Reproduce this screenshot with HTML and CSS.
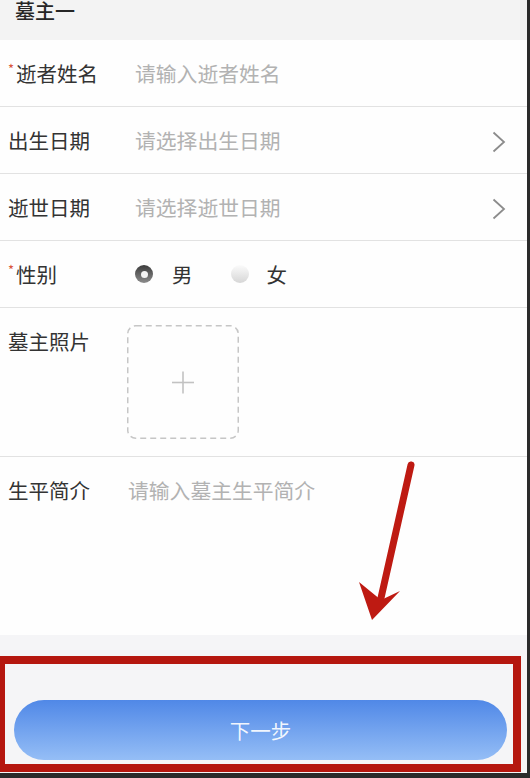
FILE: index.html
```html
<!DOCTYPE html>
<html lang="zh-CN">

<head>
  <meta charset="UTF-8">
  <meta name="viewport" content="width=device-width, initial-scale=1.0">
  <title>墓主信息</title>
  <link rel="stylesheet" href="styles.css">
</head>

<body>
  <div class="screen">
    <div class="section-title">墓主一</div>

    <div class="form">
      <div class="row">
        <span class="label"><span class="req">*</span>逝者姓名</span>
        <span class="placeholder">请输入逝者姓名</span>
      </div>

      <div class="row">
        <span class="label">出生日期</span>
        <span class="placeholder">请选择出生日期</span>
        <svg class="chevron" width="14" height="22" viewBox="0 0 14 22">
          <polyline points="1.5,1.5 12,11 1.5,20.5" fill="none" stroke="#8c8c8c" stroke-width="1.8" />
        </svg>
      </div>

      <div class="row">
        <span class="label">逝世日期</span>
        <span class="placeholder">请选择逝世日期</span>
        <svg class="chevron" width="14" height="22" viewBox="0 0 14 22">
          <polyline points="1.5,1.5 12,11 1.5,20.5" fill="none" stroke="#8c8c8c" stroke-width="1.8" />
        </svg>
      </div>

      <div class="row">
        <span class="label"><span class="req">*</span>性别</span>
        <div class="radio-group">
          <span class="radio checked"></span>
          <span class="radio-text">男</span>
          <span class="radio"></span>
          <span class="radio-text">女</span>
        </div>
      </div>

      <div class="row row-photo">
        <span class="label">墓主照片</span>
        <div class="uploader">
          <svg width="112" height="114" viewBox="0 0 112 114">
            <rect x="0.75" y="0.75" width="110.5" height="112.5" rx="8" fill="none" stroke="#c6c6c6"
              stroke-width="1.5" stroke-dasharray="6 4" />
            <line x1="45" y1="57.5" x2="67" y2="57.5" stroke="#c2c2c2" stroke-width="1.6" />
            <line x1="56" y1="46.5" x2="56" y2="68.5" stroke="#c2c2c2" stroke-width="1.6" />
          </svg>
        </div>
      </div>

      <div class="row row-intro">
        <span class="label">生平简介</span>
        <span class="placeholder">请输入墓主生平简介</span>
      </div>
    </div>

    <div class="footer">
      <button class="next-btn">下一步</button>
    </div>
    <div class="bottom-bar"></div>
  </div>

  <!-- annotation drawn over the screenshot -->
  <div class="highlight"></div>
  <svg class="arrow" width="530" height="778" viewBox="0 0 530 778">
    <line x1="411" y1="465" x2="381" y2="598" stroke="#be1a12" stroke-width="7" stroke-linecap="round" />
    <polygon points="372,620 359,582 381,600 400,591" fill="#be1a12" />
  </svg>
</body>

</html>
```

FILE: styles.css
```css
* {
  box-sizing: border-box;
}

body {
  margin: 0;
  height: 778px;
  overflow: hidden;
  background-color: #2b2b2b;
  font-family: "Noto Sans CJK SC", sans-serif;
  color: #333;
}

.screen {
  width: 527px;
  height: 778px;
  display: flex;
  flex-direction: column;
  background-color: #f5f5f7;
}

.section-title {
  height: 40px;
  padding-top: 1px;
  padding-left: 15px;
  font-size: 20px;
  line-height: 20px;
  font-weight: 500;
  color: #262626;
  background-color: #f3f3f3;
}

.form {
  background-color: #fefefe;
}

.row {
  display: flex;
  align-items: center;
  height: 67px;
  padding-left: 8px;
  border-bottom: 1px solid #e2e2e2;
}

.label {
  width: 127px;
  flex-shrink: 0;
  font-size: 20.5px;
  line-height: 28px;
  color: #333;
}

.req {
  display: inline-block;
  width: 8px;
  font-size: 13px;
  line-height: 13px;
  vertical-align: 8px;
  color: #d9543c;
}

.placeholder {
  font-size: 20.8px;
  line-height: 28px;
  color: #b2b2b2;
}

.chevron {
  margin-left: auto;
  margin-right: 21px;
  margin-top: 3px;
}

.radio-group {
  display: flex;
  align-items: center;
}

.radio {
  width: 18px;
  height: 18px;
  border-radius: 50%;
  background: linear-gradient(#fbfbfb, #d6d6d6);
  display: flex;
  align-items: center;
  justify-content: center;
}

.radio.checked {
  background: linear-gradient(#3c3c3c, #8c8c8c);
}

.radio.checked::after {
  content: "";
  width: 7px;
  height: 7px;
  border-radius: 50%;
  background-color: #f4f4f4;
}

.radio-text {
  margin-left: 19px;
  margin-right: 38px;
  font-size: 20.5px;
  line-height: 28px;
  color: #333;
}

.radio-text:last-child {
  margin-left: 18px;
}

.row-photo {
  height: 149px;
  align-items: flex-start;
  padding-top: 17px;
}

.row-photo .label {
  width: 119px;
  margin-top: 2px;
}

.uploader {
  width: 112px;
  height: 114px;
}

.uploader svg {
  display: block;
}

.row-intro {
  height: 178px;
  align-items: flex-start;
  padding-top: 19px;
  border-bottom: none;
}

.row-intro .label {
  width: 120px;
}

.footer {
  flex: 1;
  padding-top: 65px;
  padding-left: 14px;
}

.next-btn {
  width: 493px;
  height: 60px;
  border: none;
  border-radius: 30px;
  background: linear-gradient(#5088e7, #95bef6);
  color: rgba(255, 255, 255, 0.92);
  font-family: "Noto Sans CJK SC", sans-serif;
  font-size: 20.5px;
}

.bottom-bar {
  height: 5px;
  background-color: #2b2b2b;
}

.highlight {
  position: absolute;
  left: -3px;
  top: 656px;
  width: 524px;
  height: 116px;
  border: 8px solid #b5170f;
}

.arrow {
  position: absolute;
  left: 0;
  top: 0;
  pointer-events: none;
}
```
